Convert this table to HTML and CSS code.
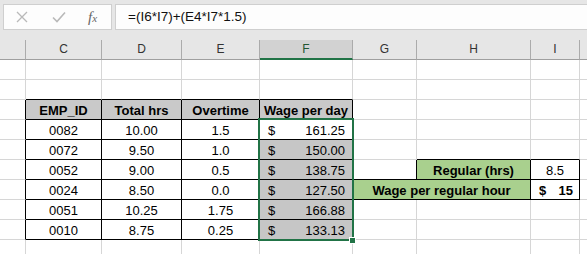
FILE: index.html
```html
<!DOCTYPE html>
<html lang="en">
<head>
    <meta charset="UTF-8">
    <title>Wage per day</title>
    <link rel="stylesheet" href="styles.css">
</head>
<body>
    <div class="formula-bar">
        <div class="fx-tools">
            <svg class="tool" width="12" height="12" viewBox="0 0 12 12"><path d="M1 1 L11 11 M11 1 L1 11" stroke="#b9b9b9" stroke-width="1.3" fill="none"/></svg>
            <svg class="tool" width="14" height="12" viewBox="0 0 14 12"><path d="M1 6.5 L5 10.5 L13 1.5" stroke="#b9b9b9" stroke-width="1.6" fill="none"/></svg>
            <span class="fx">f<small>x</small></span>
        </div>
        <div class="formula">=(I6*I7)+(E4*I7*1.5)</div>
    </div>

    <table class="sheet">
        <colgroup>
            <col class="c-b"><col class="c-c"><col class="c-d"><col class="c-e"><col class="c-f">
            <col class="c-g"><col class="c-h"><col class="c-i"><col class="c-j">
        </colgroup>
        <tr class="col-head">
            <th></th><th>C</th><th>D</th><th>E</th><th class="active">F</th><th>G</th><th>H</th><th>I</th><th></th>
        </tr>
        <tr>
            <td></td><td></td><td></td><td></td><td></td><td></td><td></td><td></td><td></td>
        </tr>
        <tr>
            <td></td><td class="edge-b"></td><td class="edge-b"></td><td class="edge-b"></td><td class="edge-b"></td><td></td><td></td><td></td><td></td>
        </tr>
        <tr>
            <td class="edge-r"></td>
            <td class="box head">EMP_ID</td>
            <td class="box head">Total hrs</td>
            <td class="box head">Overtime</td>
            <td class="box head">Wage per day</td>
            <td></td><td></td><td></td><td></td>
        </tr>
        <tr>
            <td class="edge-r"></td>
            <td class="box">0082</td><td class="box">10.00</td><td class="box">1.5</td>
            <td class="box money current">
                <div class="acct"><span>$</span><span>161.25</span></div>
                <div class="selection"><div class="handle"></div></div>
            </td>
            <td></td><td></td><td></td><td></td>
        </tr>
        <tr>
            <td class="edge-r"></td>
            <td class="box">0072</td><td class="box">9.50</td><td class="box">1.0</td>
            <td class="box money"><div class="acct"><span>$</span><span>150.00</span></div></td>
            <td></td><td class="edge-b"></td><td class="edge-b"></td><td></td>
        </tr>
        <tr>
            <td class="edge-r"></td>
            <td class="box">0052</td><td class="box">9.00</td><td class="box">0.5</td>
            <td class="box money"><div class="acct"><span>$</span><span>138.75</span></div></td>
            <td class="edge-r edge-b"></td>
            <td class="box bold green">Regular (hrs)</td>
            <td class="box">8.5</td>
            <td></td>
        </tr>
        <tr>
            <td class="edge-r"></td>
            <td class="box">0024</td><td class="box">8.50</td><td class="box">0.0</td>
            <td class="box money"><div class="acct"><span>$</span><span>127.50</span></div></td>
            <td class="box bold green" colspan="2">Wage per regular hour</td>
            <td class="box bold"><div class="acct rate"><span>$</span><span>15</span></div></td>
            <td></td>
        </tr>
        <tr>
            <td class="edge-r"></td>
            <td class="box">0051</td><td class="box">10.25</td><td class="box">1.75</td>
            <td class="box money"><div class="acct"><span>$</span><span>166.88</span></div></td>
            <td></td><td></td><td></td><td></td>
        </tr>
        <tr>
            <td class="edge-r"></td>
            <td class="box">0010</td><td class="box">8.75</td><td class="box">0.25</td>
            <td class="box money"><div class="acct"><span>$</span><span>133.13</span></div></td>
            <td></td><td></td><td></td><td></td>
        </tr>
        <tr>
            <td></td><td></td><td></td><td></td><td></td><td></td><td></td><td></td><td></td>
        </tr>
    </table>
</body>
</html>
```

FILE: styles.css
```css
body {
    margin: 0;
    background-color: #e6e6e6;
    font-family: 'Liberation Sans', Arial, sans-serif;
    overflow: hidden;
    width: 587px;
    height: 254px;
}
.formula-bar {
    display: flex;
    gap: 3px;
    padding: 4px 0 0 3px;
    height: 26px;
    margin-bottom: 10px;
}
.fx-tools {
    width: 109px;
    box-sizing: border-box;
    background: #fdfdfd;
    border: 1px solid #cfcfcf;
    display: flex;
    align-items: center;
}
.fx-tools svg:first-child {
    margin-left: 12px;
}
.fx-tools svg:nth-child(2) {
    margin-left: 24px;
}
.fx {
    margin-left: 22px;
    font-family: 'Liberation Serif', serif;
    font-style: italic;
    font-size: 15px;
    color: #666;
}
.fx small {
    font-size: 11px;
}
.formula {
    flex: 1;
    margin-right: -10px;
    box-sizing: border-box;
    background: #fdfdfd;
    border: 1px solid #cfcfcf;
    font-size: 13.5px;
    line-height: 24px;
    padding-left: 12px;
    color: #111;
}
.sheet {
    border-collapse: separate;
    border-spacing: 0;
    table-layout: fixed;
    width: 600px;
    background: #fff;
    font-size: 13px;
    color: #000;
}
.c-b { width: 26px; }
.c-c { width: 76px; }
.c-d { width: 80px; }
.c-e { width: 78px; }
.c-f { width: 93px; }
.c-g { width: 64px; }
.c-h { width: 114px; }
.c-i { width: 49px; }
.c-j { width: 20px; }
.sheet td {
    height: 17px;
    padding: 2px 0 0 0;
    line-height: 17px;
    border-right: 1px solid #d6d6d6;
    border-bottom: 1px solid #d6d6d6;
    text-align: center;
    white-space: nowrap;
}
.col-head th {
    background: #e6e6e6;
    height: 19px;
    padding: 0;
    font-weight: normal;
    font-size: 12px;
    line-height: 19px;
    color: #333;
    border-right: 1px solid #ababab;
    border-bottom: 1px solid #9f9f9f;
}
.col-head th.active {
    background: #d2d2d2;
    color: #215732;
    height: 18px;
    line-height: 18px;
    border-bottom: 2px solid #217346;
}
.sheet td.box {
    border-right-color: #000;
    border-bottom-color: #000;
}
.sheet td.edge-r {
    border-right-color: #000;
}
.sheet td.edge-b {
    border-bottom-color: #000;
}
.head {
    background: #c9c9c9;
    font-weight: bold;
}
.bold {
    font-weight: bold;
}
.green {
    background: #a9d08e;
}
.money {
    background: #c6c6c6;
}
.money.current {
    background: #fff;
    position: relative;
}
.acct {
    display: flex;
    justify-content: space-between;
    padding: 0 7px 0 8px;
}
.acct.rate {
    padding: 0 6px 0 8px;
}
.selection {
    position: absolute;
    left: -2px;
    top: -2px;
    width: 96px;
    height: 123px;
    box-sizing: border-box;
    border: 2px solid #217346;
}
.handle {
    position: absolute;
    left: 89px;
    top: 117px;
    width: 5px;
    height: 5px;
    background: #217346;
    border: 1px solid #fff;
}
```
